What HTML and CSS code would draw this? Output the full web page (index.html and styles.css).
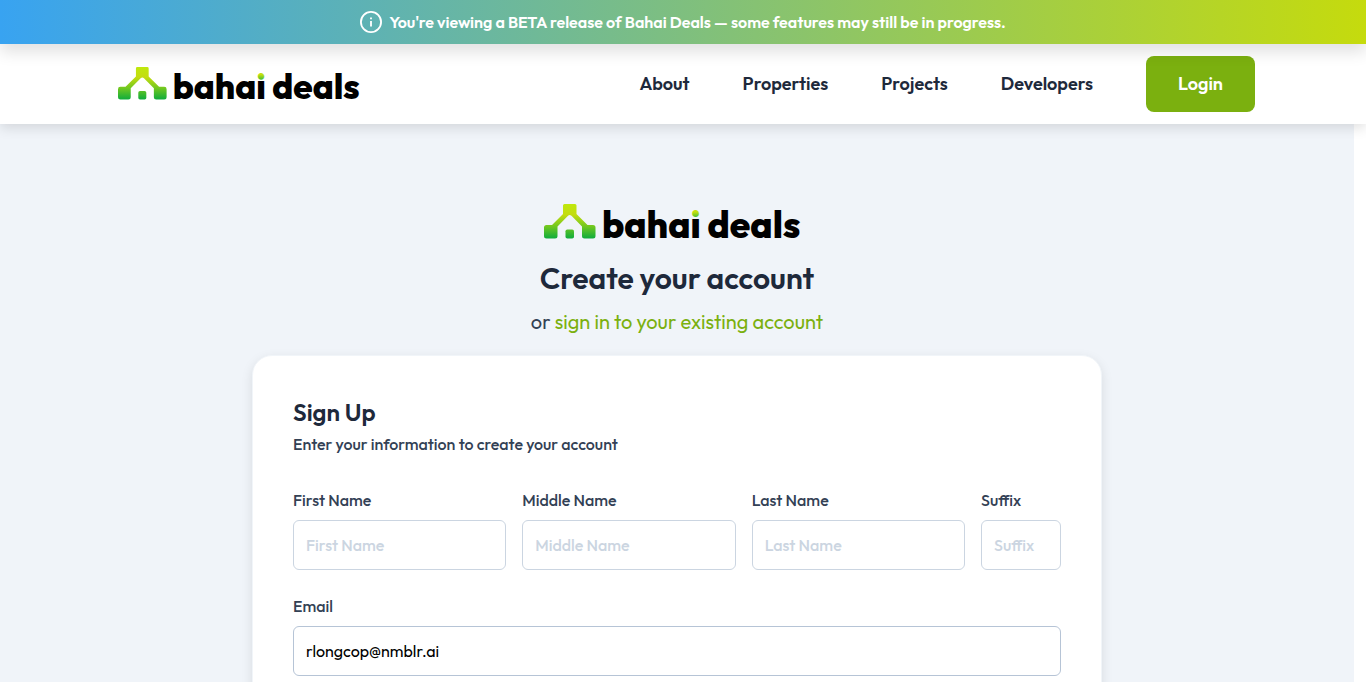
FILE: index.html
```html
<!DOCTYPE html>
<html lang="en">
<head>
<meta charset="utf-8">
<meta name="viewport" content="width=device-width, initial-scale=1">
<title>Sign Up | Bahai Deals</title>
<link rel="stylesheet" href="styles.css">
</head>
<body>
<svg class="sprite" aria-hidden="true">
  <defs>
    <linearGradient id="leaf" gradientUnits="userSpaceOnUse" x1="0" y1="0" x2="0" y2="34">
      <stop offset="0" stop-color="#bfe80c"/>
      <stop offset="0.32" stop-color="#c4dc10"/>
      <stop offset="0.65" stop-color="#73c81f"/>
      <stop offset="1" stop-color="#12ad3b"/>
    </linearGradient>
    <linearGradient id="dot" gradientUnits="userSpaceOnUse" x1="0" y1="8" x2="0" y2="34">
      <stop offset="0" stop-color="#c4e010"/>
      <stop offset="0.24" stop-color="#2fb838"/>
      <stop offset="0.24" stop-color="#000"/>
    </linearGradient>
    <symbol id="logo" viewBox="0 0 267 36">
      <path fill="url(#leaf)" d="M20.500 0H31Q32.500 0 32.500 1.500V10L43.500 21H49Q51.500 21 51.500 23.500V32Q51.500 34.500 49 34.500H40.500Q38 34.500 38 32V22.500L27.500 11.800Q25.700 10.200 24 11.800L13.500 22.500V32Q13.500 34.500 11 34.500H2.500Q0 34.500 0 32V23.500Q0 21 2.500 21H8L19 10V1.500Q19 0 20.500 0Z"/>
      <rect fill="url(#leaf)" x="21.500" y="25.500" width="8.500" height="9" rx="1.800"/>
      <text class="wordmark" x="58" y="34">baha<tspan fill="url(#dot)">i</tspan> deals</text>
    </symbol>
  </defs>
</svg>

<div class="banner" role="status">
  <svg class="banner-icon" viewBox="0 0 24 24" aria-hidden="true"><circle cx="12" cy="12" r="11"/><path d="M12 11v6M12 7v2"/></svg>
  <span>You're viewing a BETA release of Bahai Deals — some features may still be in progress.</span>
</div>

<header class="header">
  <div class="header-inner">
    <a class="brand" href="#" aria-label="bahai deals"><svg class="brand-logo"><use href="#logo"/></svg></a>
    <nav class="nav">
      <a href="#">About</a>
      <a href="#">Properties</a>
      <a href="#">Projects</a>
      <a href="#">Developers</a>
      <button class="login" type="button">Login</button>
    </nav>
  </div>
</header>

<main class="page">
  <svg class="page-logo" role="img" aria-label="bahai deals"><use href="#logo"/></svg>
  <h1 class="title">Create your account</h1>
  <p class="subtitle">or <a href="#">sign in to your existing account</a></p>
  <form class="card">
    <h2 class="card-title">Sign Up</h2>
    <p class="card-note">Enter your information to create your account</p>
    <div class="name-row">
      <div class="field"><label for="first">First Name</label><input id="first" type="text" placeholder="First Name"></div>
      <div class="field"><label for="middle">Middle Name</label><input id="middle" type="text" placeholder="Middle Name"></div>
      <div class="field"><label for="last">Last Name</label><input id="last" type="text" placeholder="Last Name"></div>
      <div class="field"><label for="suffix">Suffix</label><input id="suffix" type="text" placeholder="Suffix"></div>
    </div>
    <div class="field"><label for="email">Email</label><input id="email" class="filled" type="email" value="rlongcop@nmblr.ai"></div>
  </form>
</main>
</body>
</html>
```
FILE: styles.css
```css
* { box-sizing: border-box; }
html, body { height: 100%; }
body {
  margin: 0;
  display: flex;
  flex-direction: column;
  overflow: hidden;
  background: #fff;
  color: #1e293b;
  font: 500 16px/24px Outfit, Lato, sans-serif;
}
a { color: inherit; text-decoration: none; }
h1, h2, p { margin: 0; }
input, button { font: inherit; }

.sprite { position: absolute; width: 0; height: 0; }
.wordmark { font: 800 37px Outfit, Inter, sans-serif; }

.banner {
  position: relative;
  z-index: 2;
  flex: none;
  display: flex;
  align-items: center;
  justify-content: center;
  gap: 7px;
  padding: 10px 16px;
  background: linear-gradient(90deg, #38a3f1, #c5db0d);
  box-shadow: 0 8px 16px rgba(0, 0, 0, 0.12);
  color: #fff;
  font-weight: 600;
}
.banner-icon { width: 22px; height: 22px; fill: none; stroke: #fff; stroke-width: 2; }

.header {
  position: relative;
  z-index: 1;
  flex: none;
  background: #fff;
  box-shadow: 0 4px 12px rgba(0, 0, 0, 0.12);
}
.header-inner {
  display: flex;
  align-items: center;
  justify-content: space-between;
  max-width: 1144px;
  margin: 0 auto;
  padding: 12px 0;
}
.brand { padding-left: 7px; }
.brand-logo { display: block; width: 252px; height: 34px; }
.nav { display: flex; align-items: center; gap: 53px; font-size: 18px; font-weight: 600; }
.login {
  height: 56px;
  padding: 0 32px;
  border: 0;
  border-radius: 8px;
  background: #7bb00f;
  color: #fff;
}

.page {
  flex: 1 0 auto;
  display: flex;
  flex-direction: column;
  align-items: center;
  margin-right: 12px;
  padding: 80px 24px 0;
  background: #f0f4f9;
}
.page-logo { width: 267px; height: 36px; }
.title { margin-top: 16px; font-size: 30px; line-height: 44px; font-weight: 600; }
.subtitle { margin: 8px 0 19px; font-size: 20px; line-height: 28px; font-weight: 400; color: #334155; }
.subtitle a { color: #7bb00f; }

.card {
  width: 100%;
  max-width: 850px;
  padding: 40px;
  border: 1px solid #f1f5f9;
  border-radius: 20px;
  background: #fff;
  box-shadow: 0 4px 12px rgba(0, 0, 0, 0.1);
}
.card-title { font-size: 24px; line-height: 32px; font-weight: 600; }
.card-note { margin: 4px 0 32px; color: #334155; }
.name-row {
  display: grid;
  grid-template-columns: repeat(3, 1fr) 80px;
  gap: 16px;
  margin-bottom: 24px;
}
.field { display: flex; flex-direction: column; gap: 8px; min-width: 0; }
.field label { color: #334155; }
.field input {
  width: 100%;
  height: 50px;
  padding: 0 12px;
  border: 1px solid #cbd5e1;
  border-radius: 6px;
  background: #fff;
  color: #000;
}
.field input::placeholder { color: #cbd5e1; opacity: 1; }
.field .filled { border-color: #b6c4d6; font-weight: 400; }
```
